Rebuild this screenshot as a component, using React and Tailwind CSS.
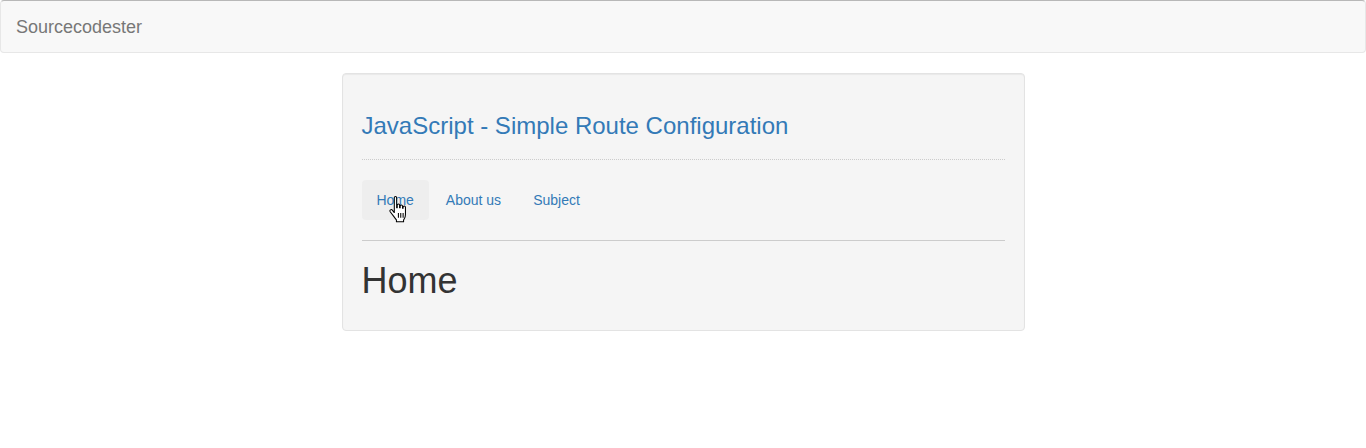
export default function App() {
    const links = ["Home", "About us", "Subject"];

    return (
        <div
            className="min-h-[448px] bg-white text-[14px] text-[#333]"
            style={{ fontFamily: '"Liberation Sans", Arial, sans-serif' }}
        >
            <nav className="h-[53px] rounded-[4px] border border-[#e7e7e7] border-t-[#b8b8b8] bg-[#f8f8f8] flex items-center px-[15px]">
                <span className="text-[18px] leading-[20px] text-[#777]">
                    Sourcecodester
                </span>
            </nav>

            <div className="mx-auto mt-[20px] w-[683px] rounded-[4px] border border-[#e3e3e3] bg-[#f5f5f5] p-[19px] shadow-[inset_0_1px_1px_rgba(0,0,0,0.05)]">
                <div className="border-b border-dotted border-[#ccc] pb-[10px]">
                    <h3 className="mt-[20px] mb-[10px] text-[24px] leading-[26.4px] text-[#337ab7]">
                        JavaScript - Simple Route Configuration
                    </h3>
                </div>

                <ul className="mt-[20px] flex">
                    {links.map((label, i) => (
                        <li key={label} className={i > 0 ? "ml-[2px]" : ""}>
                            <a
                                href="#"
                                className={
                                    "relative block rounded-[4px] px-[15px] py-[10px] leading-[20px] text-[#337ab7] " +
                                    (i === 0 ? "bg-[#eee]" : "")
                                }
                            >
                                {label}
                                {i === 0 && (
                                    <svg
                                        className="absolute left-[27px] top-[16px]"
                                        width="20"
                                        height="27"
                                        viewBox="0 0 17 23"
                                    >
                                        <path
                                            d="M4.5 1.5c0-.6.5-1 1-1s1 .4 1 1V10h.5V7.8c0-.6.5-1 1-1s1 .4 1 1V10h.5V8.6c0-.6.5-1 1-1s1 .4 1 1V10.5h.5V9.6c0-.6.5-1 1-1s1 .4 1 1v6.2c0 1.6-.4 2.6-1 3.6l-.6 1V22H6.3v-1.7c-.6-.7-1.6-2-2.6-3.4L1 13.4c-.4-.6-.3-1.3.2-1.6.5-.4 1.2-.3 1.6.2l1.7 2.1V1.5z"
                                            fill="#fff"
                                            stroke="#000"
                                            strokeWidth="0.9"
                                            strokeLinejoin="round"
                                        />
                                        <path d="M8 14.5v4M10 14.5v4M12 14.5v4" stroke="#000" strokeWidth="0.9" />
                                    </svg>
                                )}
                            </a>
                        </li>
                    ))}
                </ul>

                <hr className="mt-[20px] mb-[20px] border-0 border-t border-[#ccc]" />

                <h1 className="mt-[20px] mb-[10px] text-[36px] leading-[39.6px] text-[#333]">
                    Home
                </h1>
            </div>
        </div>
    );
}
